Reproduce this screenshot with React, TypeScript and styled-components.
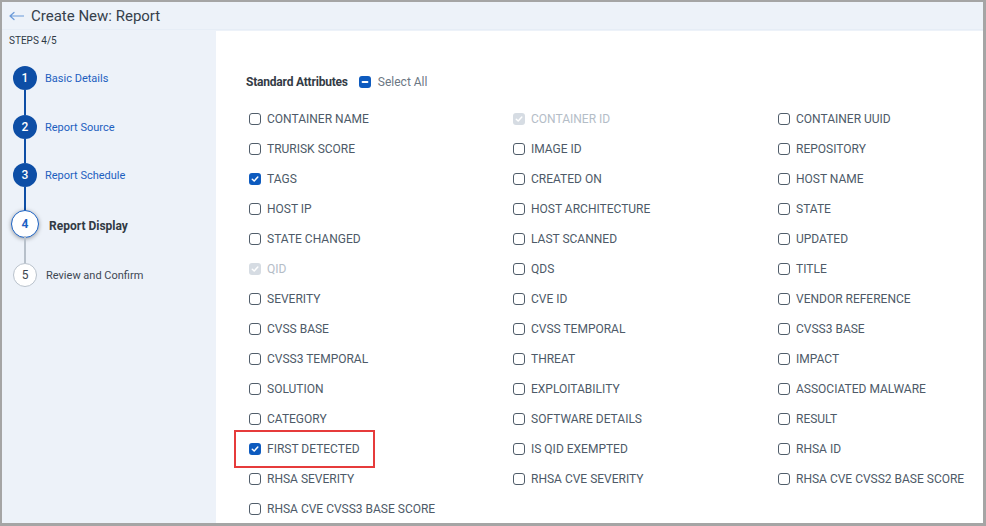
import React from "react";
import styled, { createGlobalStyle, css } from "styled-components";

const Global = createGlobalStyle`
  html, body { margin: 0; padding: 0; background: #a5a5a5; }
  body { font-family: Roboto, "Liberation Sans", Arial, sans-serif; }
  * { box-sizing: border-box; }
`;

const Frame = styled.div`
  width: 986px;
  height: 526px;
  border-style: solid;
  border-color: #a5a5a5;
  border-width: 2px 3px 3px 2px;
  background: #edf2f9;
  display: flex;
  flex-direction: column;
  overflow: hidden;
`;

const Header = styled.header`
  height: 28px;
  display: flex;
  align-items: center;
  gap: 7px;
  padding-left: 7px;
  border-bottom: 1px solid #e6edf6;
`;

const Title = styled.h1`
  margin: 0;
  font-size: 15px;
  font-weight: 400;
  color: #363f4b;
  line-height: 20px;
`;

const Body = styled.div`
  flex: 1;
  display: flex;
  min-height: 0;
`;

const Sidebar = styled.aside`
  width: 214px;
  flex: none;
  padding: 5px 0 0 6px;
`;

const StepsLabel = styled.div`
  font-size: 10px;
  line-height: 12px;
  color: #2f3a45;
  padding-left: 1px;
`;

const StepList = styled.ol`
  list-style: none;
  margin: 19px 0 0;
  padding: 0 0 0 5px;
  display: flex;
  flex-direction: column;
`;

type StepState = "done" | "active" | "todo";

const StepRow = styled.li`
  display: flex;
  align-items: center;
  height: 24px;
`;

const Circle = styled.span<{ $state: StepState }>`
  flex: none;
  width: 24px;
  height: 24px;
  border-radius: 50%;
  display: flex;
  align-items: center;
  justify-content: center;
  font-size: 12px;
  ${(p) =>
    p.$state === "done" &&
    css`
      background: #0d4ea6;
      color: #fff;
      font-weight: 500;
    `}
  ${(p) =>
    p.$state === "active" &&
    css`
      width: 28px;
      height: 28px;
      margin: -2px;
      background: #fff;
      border: 1.5px solid #1b62c4;
      color: #1b62c4;
      font-weight: 700;
      box-shadow: 0 1px 4px rgba(0, 0, 0, 0.35);
    `}
  ${(p) =>
    p.$state === "todo" &&
    css`
      background: #fff;
      border: 1px solid #b9c2cc;
      color: #3b4550;
    `}
`;

const StepLabel = styled.span<{ $state: StepState }>`
  margin-left: ${(p) => (p.$state === "active" ? "12px" : p.$state === "todo" ? "9px" : "8px")};
  margin-top: ${(p) => (p.$state === "active" ? "3px" : "0")};
  font-size: ${(p) => (p.$state === "active" ? "12px" : "11px")};
  font-weight: ${(p) => (p.$state === "active" ? 700 : 400)};
  color: ${(p) =>
    p.$state === "done" ? "#1d5fbf" : p.$state === "active" ? "#323a44" : "#3e4853"};
  white-space: nowrap;
`;

const Connector = styled.span<{ $h: number; $done: boolean }>`
  display: block;
  width: 2px;
  height: ${(p) => p.$h}px;
  margin-left: 11px;
  background: ${(p) => (p.$done ? "#0d4ea6" : "#b7c0ca")};
`;

const Main = styled.main`
  flex: 1;
  background: #fff;
  margin-top: 1px;
  padding: 41px 0 0 30px;
  overflow: hidden;
`;

const SectionHead = styled.div`
  display: flex;
  align-items: center;
  height: 20px;
`;

const SectionTitle = styled.span`
  font-size: 12px;
  font-weight: 700;
  color: #333b45;
  letter-spacing: -0.2px;
`;

const SelectAll = styled.label`
  display: flex;
  align-items: center;
  margin-left: 11px;
  gap: 7px;
  font-size: 12px;
  color: #6c7784;
`;

const Grid = styled.div`
  display: grid;
  grid-template-columns: 264px 265px 1fr;
  grid-auto-rows: 30px;
  margin-top: 12px;
  padding-left: 3px;
`;

const Cell = styled.label<{ $disabled?: boolean }>`
  display: flex;
  align-items: center;
  font-size: 12px;
  color: ${(p) => (p.$disabled ? "#b4bdc7" : "#4d5a68")};
  white-space: nowrap;
`;

const CellInner = styled.span<{ $highlight?: boolean }>`
  position: relative;
  display: flex;
  align-items: center;
  gap: 6px;
  ${(p) =>
    p.$highlight &&
    css`
      &::after {
        content: "";
        position: absolute;
        left: -15px;
        right: -15px;
        top: -12px;
        bottom: -12px;
        border: 2px solid #e63b3b;
      }
    `}
`;

type BoxKind = "off" | "on" | "disabled" | "mixed";

const Box = styled.span<{ $kind: BoxKind }>`
  flex: none;
  width: 12px;
  height: 12px;
  border-radius: 3px;
  display: flex;
  align-items: center;
  justify-content: center;
  ${(p) =>
    p.$kind === "off" &&
    css`
      border: 1.3px solid #505d6a;
      background: #fff;
    `}
  ${(p) =>
    (p.$kind === "on" || p.$kind === "mixed") &&
    css`
      background: #0e5bbf;
    `}
  ${(p) =>
    p.$kind === "disabled" &&
    css`
      background: #d6dce3;
    `}
`;

const CheckBox: React.FC<{ kind: BoxKind }> = ({ kind }) => (
  <Box $kind={kind}>
    {(kind === "on" || kind === "disabled") && (
      <svg width="8" height="8" viewBox="0 0 8 8">
        <path d="M1.3 4.2 L3.2 6 L6.8 2" fill="none" stroke="#fff" strokeWidth="1.5" strokeLinecap="round" strokeLinejoin="round" />
      </svg>
    )}
    {kind === "mixed" && (
      <svg width="8" height="8" viewBox="0 0 8 8">
        <path d="M1.5 4 H6.5" stroke="#fff" strokeWidth="1.8" strokeLinecap="round" />
      </svg>
    )}
  </Box>
);

const BackArrow = () => (
  <svg width="15" height="10" viewBox="0 0 15 10">
    <path d="M1 5 H14.5 M5 1.5 L1 5 L5 8.5" fill="none" stroke="#6b9ad9" strokeWidth="1.2" strokeLinecap="round" strokeLinejoin="round" />
  </svg>
);

type Item = { label: string; kind?: BoxKind; highlight?: boolean };

const items: Item[] = [
  { label: "CONTAINER NAME" },
  { label: "CONTAINER ID", kind: "disabled" },
  { label: "CONTAINER UUID" },
  { label: "TRURISK SCORE" },
  { label: "IMAGE ID" },
  { label: "REPOSITORY" },
  { label: "TAGS", kind: "on" },
  { label: "CREATED ON" },
  { label: "HOST NAME" },
  { label: "HOST IP" },
  { label: "HOST ARCHITECTURE" },
  { label: "STATE" },
  { label: "STATE CHANGED" },
  { label: "LAST SCANNED" },
  { label: "UPDATED" },
  { label: "QID", kind: "disabled" },
  { label: "QDS" },
  { label: "TITLE" },
  { label: "SEVERITY" },
  { label: "CVE ID" },
  { label: "VENDOR REFERENCE" },
  { label: "CVSS BASE" },
  { label: "CVSS TEMPORAL" },
  { label: "CVSS3 BASE" },
  { label: "CVSS3 TEMPORAL" },
  { label: "THREAT" },
  { label: "IMPACT" },
  { label: "SOLUTION" },
  { label: "EXPLOITABILITY" },
  { label: "ASSOCIATED MALWARE" },
  { label: "CATEGORY" },
  { label: "SOFTWARE DETAILS" },
  { label: "RESULT" },
  { label: "FIRST DETECTED", kind: "on", highlight: true },
  { label: "IS QID EXEMPTED" },
  { label: "RHSA ID" },
  { label: "RHSA SEVERITY" },
  { label: "RHSA CVE SEVERITY" },
  { label: "RHSA CVE CVSS2 BASE SCORE" },
  { label: "RHSA CVE CVSS3 BASE SCORE" },
];

const steps: { n: number; label: string; state: StepState }[] = [
  { n: 1, label: "Basic Details", state: "done" },
  { n: 2, label: "Report Source", state: "done" },
  { n: 3, label: "Report Schedule", state: "done" },
  { n: 4, label: "Report Display", state: "active" },
  { n: 5, label: "Review and Confirm", state: "todo" },
];
const connectorHeights = [25, 24, 25, 27];

export default function App() {
  return (
    <>
      <Global />
      <Frame>
        <Header>
          <BackArrow />
          <Title>Create New: Report</Title>
        </Header>
        <Body>
          <Sidebar>
            <StepsLabel>STEPS 4/5</StepsLabel>
            <StepList>
              {steps.map((s, i) => (
                <React.Fragment key={s.n}>
                  <StepRow>
                    <Circle $state={s.state}>{s.n}</Circle>
                    <StepLabel $state={s.state}>{s.label}</StepLabel>
                  </StepRow>
                  {i < steps.length - 1 && (
                    <Connector $h={connectorHeights[i]} $done={s.state === "done"} />
                  )}
                </React.Fragment>
              ))}
            </StepList>
          </Sidebar>
          <Main>
            <SectionHead>
              <SectionTitle>Standard Attributes</SectionTitle>
              <SelectAll>
                <CheckBox kind="mixed" />
                Select All
              </SelectAll>
            </SectionHead>
            <Grid>
              {items.map((it) => (
                <Cell key={it.label} $disabled={it.kind === "disabled"}>
                  <CellInner $highlight={it.highlight}>
                    <CheckBox kind={it.kind ?? "off"} />
                    {it.label}
                  </CellInner>
                </Cell>
              ))}
            </Grid>
          </Main>
        </Body>
      </Frame>
    </>
  );
}
